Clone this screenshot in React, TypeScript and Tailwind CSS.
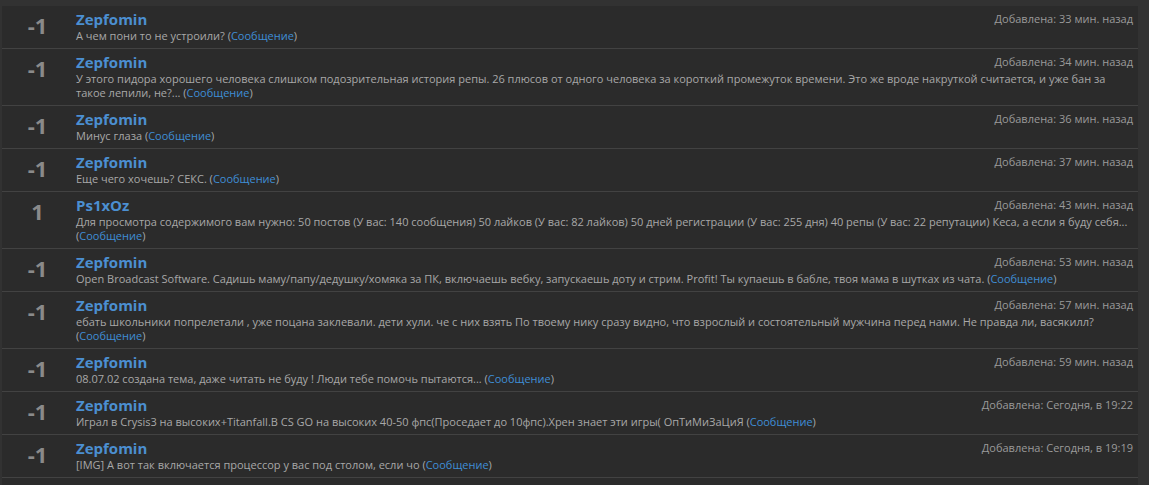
import React from 'react';

interface Item {
  score: string;
  user: string;
  time: string;
  text: string;
}

const items: Item[] = [
  { score: '-1', user: 'Zepfomin', time: 'Добавлена: 33 мин. назад', text: 'А чем пони то не устроили?' },
  {
    score: '-1',
    user: 'Zepfomin',
    time: 'Добавлена: 34 мин. назад',
    text: 'У этого пидора хорошего человека слишком подозрительная история репы. 26 плюсов от одного человека за короткий промежуток времени. Это же вроде накруткой считается, и уже бан за такое лепили, не?...'
  },
  { score: '-1', user: 'Zepfomin', time: 'Добавлена: 36 мин. назад', text: 'Минус глаза' },
  { score: '-1', user: 'Zepfomin', time: 'Добавлена: 37 мин. назад', text: 'Еще чего хочешь? СЕКС.' },
  {
    score: '1',
    user: 'Ps1xOz',
    time: 'Добавлена: 43 мин. назад',
    text: 'Для просмотра содержимого вам нужно: 50 постов (У вас: 140 сообщения) 50 лайков (У вас: 82 лайков) 50 дней регистрации (У вас: 255 дня) 40 репы (У вас: 22 репутации) Кеса, а если я буду себя...'
  },
  {
    score: '-1',
    user: 'Zepfomin',
    time: 'Добавлена: 53 мин. назад',
    text: 'Open Broadcast Software. Садишь маму/папу/дедушку/хомяка за ПК, включаешь вебку, запускаешь доту и стрим. Profit! Ты купаешь в бабле, твоя мама в шутках из чата.'
  },
  {
    score: '-1',
    user: 'Zepfomin',
    time: 'Добавлена: 57 мин. назад',
    text: 'ебать школьники попрелетали , уже поцана заклевали. дети хули. че с них взять По твоему нику сразу видно, что взрослый и состоятельный мужчина перед нами. Не правда ли, васякилл?'
  },
  {
    score: '-1',
    user: 'Zepfomin',
    time: 'Добавлена: 59 мин. назад',
    text: '08.07.02 создана тема, даже читать не буду ! Люди тебе помочь пытаются...'
  },
  {
    score: '-1',
    user: 'Zepfomin',
    time: 'Добавлена: Сегодня, в 19:22',
    text: 'Играл в Crysis3 на высоких+Titanfall.В CS GO на высоких 40-50 фпс(Проседает до 10фпс).Хрен знает эти игры( ОпТиМиЗаЦиЯ'
  },
  {
    score: '-1',
    user: 'Zepfomin',
    time: 'Добавлена: Сегодня, в 19:19',
    text: '[IMG] А вот так включается процессор у вас под столом, если чо'
  }
];

export default function App() {
  return (
    <div
      className="min-h-[485px] w-full bg-[#323232] pt-[6px] pl-[2px]"
      style={{ fontFamily: '"Open Sans", "Noto Sans", sans-serif' }}
    >
      <div className="w-[1136px] bg-[#2b2b2b] pb-[12px]">
        {items.map((it, i) => (
          <div key={i} className="flex border-b border-[#424242]">
            <div className="w-[71px] shrink-0 pt-[4px] text-center text-[22px] font-bold leading-[30px] text-[#8a8a8a]">
              {it.score}
            </div>
            <div className="flex-1 pt-[4px] pb-[5px] pl-[3px] pr-[5px]">
              <div className="flex items-start justify-between">
                <a className="text-[15px] font-bold leading-[19px] text-[#4b8fd1]">{it.user}</a>
                <span className="pt-[2px] text-[11px] leading-[14px] text-[#9a9a9a]">{it.time}</span>
              </div>
              <div className="text-[11px] leading-[14px] text-[#a8a8a8]">
                {it.text} (<a className="text-[#3f8ed6]">Сообщение</a>)
              </div>
            </div>
          </div>
        ))}
      </div>
    </div>
  );
}
